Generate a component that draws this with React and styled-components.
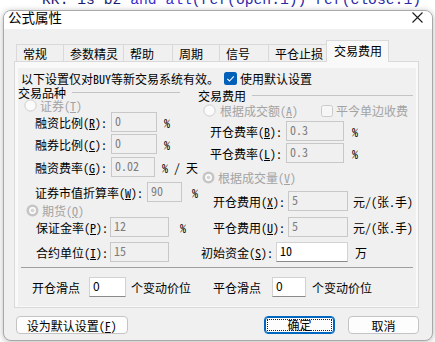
import React from 'react'
import styled, { createGlobalStyle } from 'styled-components'

const UI_FONT = `"Noto Sans Mono CJK SC", "Noto Sans CJK SC", sans-serif`
const YAHEI = `"Noto Sans CJK SC", sans-serif`

const GlobalStyle = createGlobalStyle`
  html, body {
    margin: 0;
    padding: 0;
    background: #fff;
  }
  body {
    font-family: ${UI_FONT};
    font-size: 12px;
    line-height: 13px;
    color: #000;
  }
`

const Page = styled.div`
  width: 435px;
  height: 342px;
  overflow: hidden;
  background: #fff;
`

const CodeLine = styled.div`
  height: 10px;
  overflow: hidden;
  padding-left: 42px;
  font-family: "Liberation Mono", monospace;
  font-size: 14.7px;
  line-height: 15px;
  white-space: pre;

  & > div {
    margin-top: -7px;
  }
`

const Token = styled.span`
  color: ${(p) => p.$color};
`

const Window = styled.div`
  margin-left: 3px;
  width: 430px;
  height: 331px;
  box-sizing: border-box;
  border: 1px solid #a9a9a9;
  border-radius: 8px;
  overflow: hidden;
  background: #f0f0f0;
  box-shadow: 0 1px 6px rgba(0, 0, 0, 0.28);
  display: flex;
  flex-direction: column;
`

const TitleBar = styled.div`
  background: #fff;
  display: flex;
  align-items: center;
  justify-content: space-between;
  padding: 0 9px 5px 4px;
  height: 13px;
`

const Title = styled.span`
  font-family: ${YAHEI};
  font-size: 13.5px;
  line-height: 13px;
`

const Body = styled.div`
  padding: 11px 13px 0 10px;
`

const TabStrip = styled.div`
  display: flex;
  align-items: flex-end;
  height: 22px;
  margin-left: 2px;
  margin-bottom: -1px;
  position: relative;
  z-index: 1;
`

const Tab = styled.div`
  box-sizing: border-box;
  width: ${(p) => p.$w}px;
  height: ${(p) => (p.$active ? 22 : 18)}px;
  margin-right: -1px;
  padding: ${(p) => (p.$active ? '0 0 2px 7px' : '0 0 0 6px')};
  border: 1px solid #d9d9d9;
  border-bottom: ${(p) => (p.$active ? 'none' : '1px solid #d9d9d9')};
  background: ${(p) => (p.$active ? '#f9f9f9' : '#f0f0f0')};
  font-family: ${YAHEI};
  font-size: 12px;
  display: flex;
  align-items: center;
  white-space: nowrap;
`

const Panel = styled.div`
  box-sizing: border-box;
  width: 405px;
  height: 247px;
  border: 1px solid #d9d9d9;
  background: #f9f9f9;
  padding: 6px 2px 1px 3px;
`

const Sheet = styled.div`
  height: 100%;
  background: #f0f0f0;
  display: flex;
  flex-direction: column;
`

const IntroRow = styled.div`
  display: flex;
  align-items: center;
  height: 16px;
  margin-top: 2px;
  padding-left: 3px;
  white-space: nowrap;
`

const Columns = styled.div`
  display: flex;
`

const Column = styled.div`
  width: ${(p) => p.$w}px;
  padding-top: ${(p) => p.$top}px;
  display: flex;
  flex-direction: column;
`

const GroupHeader = styled.div`
  display: flex;
  align-items: center;
  height: ${(p) => p.$h}px;
  margin-right: ${(p) => p.$right}px;
  white-space: nowrap;

  &::after {
    content: '';
    flex: 1;
    height: 1px;
    margin-left: 6px;
    background: #c4c4c4;
  }
`

const OptionRow = styled.div`
  display: flex;
  align-items: center;
  height: ${(p) => p.$h}px;
  margin-top: ${(p) => p.$top || 0}px;
  padding-left: ${(p) => p.$indent}px;
  padding-right: ${(p) => p.$right || 0}px;
  white-space: nowrap;
`

const Muted = styled.span`
  color: #a3a3a3;
  margin-left: ${(p) => p.$gap}px;
`

const CheckLabel = styled.span`
  margin-left: 3px;
`

const Spacer = styled.div`
  flex: 1;
`

const FieldRow = styled.div`
  display: flex;
  align-items: center;
  height: 20px;
  margin-top: ${(p) => p.$top || 0}px;
  padding-left: ${(p) => p.$indent}px;
  white-space: nowrap;
`

const TextBox = styled.div`
  box-sizing: border-box;
  width: ${(p) => p.$w}px;
  height: 20px;
  margin-left: ${(p) => p.$gap}px;
  border: 1px solid ${(p) => (p.$enabled ? '#d2d2d2' : '#c8c8c8')};
  border-bottom-color: ${(p) => (p.$enabled ? '#8a8a8a' : '#c8c8c8')};
  background: ${(p) => (p.$enabled ? '#fff' : '#f0f0f0')};
  color: ${(p) => (p.$enabled ? '#000' : '#7d7d7d')};
  padding: 0 3px;
  line-height: 16px;
`

const Unit = styled.span`
  margin-left: ${(p) => p.$gap}px;
`

const Separator = styled.div`
  height: 1px;
  margin: 5px 3px 0 3px;
  background: #a0a0a0;
`

const SlipRow = styled.div`
  display: flex;
  align-items: center;
  height: 20px;
  margin-top: 9px;
  padding-left: 14px;
  font-family: ${YAHEI};
  white-space: nowrap;
`

const SlipText = styled.span`
  margin-left: ${(p) => p.$gap || 0}px;
`

const Footer = styled.div`
  display: flex;
  align-items: center;
  margin-top: 8px;
  padding-left: 2px;
`

const Button = styled.div`
  box-sizing: border-box;
  width: ${(p) => p.$w}px;
  height: 18px;
  margin-left: ${(p) => p.$gap || 0}px;
  border: 1px solid ${(p) => (p.$primary ? '#0067c0' : '#c4c4c4')};
  box-shadow: ${(p) => (p.$primary ? 'inset 0 0 0 1px #0067c0' : 'none')};
  border-radius: 4px;
  background: #fdfdfd;
  display: flex;
  align-items: center;
  justify-content: center;
  padding: 2px;
`

const FocusRing = styled.div`
  flex: 1;
  align-self: stretch;
  border: 1px dotted #222;
  display: flex;
  align-items: center;
  justify-content: center;
  line-height: 10px;
`

const tabs = [
  { label: '常规', w: 48 },
  { label: '参数精灵', w: 61 },
  { label: '帮助', w: 50 },
  { label: '周期', w: 48 },
  { label: '信号', w: 50 },
  { label: '平仓止损', w: 59 },
  { label: '交易费用', w: 63, active: true },
]

const Key = ({ k }) => (
  <>
    (<u>{k}</u>)
  </>
)

const CloseIcon = () => (
  <svg width="11" height="11" viewBox="0 0 11 11">
    <path d="M0.5 0.5 L10.5 10.5 M10.5 0.5 L0.5 10.5" stroke="#1a1a1a" strokeWidth="1.1" />
  </svg>
)

const Radio = ({ checked }) =>
  checked ? (
    <svg width="13" height="13" viewBox="0 0 13 13">
      <circle cx="6.5" cy="6.5" r="6" fill="#c5c5c5" />
      <circle cx="6.5" cy="6.5" r="3.4" fill="#fff" />
      <circle cx="6.5" cy="6.5" r="2" fill="#d6d6d6" />
    </svg>
  ) : (
    <svg width="13" height="13" viewBox="0 0 13 13">
      <circle cx="6.5" cy="6.5" r="5.6" fill="#fbfbfb" stroke="#cdcdcd" strokeWidth="1" />
    </svg>
  )

const CheckBox = ({ checked }) =>
  checked ? (
    <svg width="13" height="13" viewBox="0 0 13 13">
      <rect x="0" y="0" width="13" height="13" rx="2.5" fill="#005fb8" />
      <path d="M3.3 6.8 L5.5 9 L9.8 4.3" fill="none" stroke="#fff" strokeWidth="1.1" />
    </svg>
  ) : (
    <svg width="12" height="12" viewBox="0 0 12 12">
      <rect x="0.5" y="0.5" width="11" height="11" rx="2" fill="#f6f6f6" stroke="#cbcbcb" />
    </svg>
  )

const Field = ({ label, value, indent, gap, w, unit, unitGap, top, enabled }) => (
  <FieldRow $indent={indent} $top={top}>
    <span>{label}</span>
    <TextBox $w={w} $gap={gap} $enabled={enabled}>
      {value}
    </TextBox>
    {unit && <Unit $gap={unitGap}>{unit}</Unit>}
  </FieldRow>
)

export default function App() {
  return (
    <Page>
      <GlobalStyle />
      <CodeLine>
        <div>
          <Token $color="#1b1b6e">RR: is bz </Token>
          <Token $color="#3a2fd0">and all</Token>
          <Token $color="#2a2aa8">(ref(open.1)) ref(close.1)</Token>
        </div>
      </CodeLine>
      <Window>
        <TitleBar>
          <Title>公式属性</Title>
          <CloseIcon />
        </TitleBar>
        <Body>
          <TabStrip>
            {tabs.map((t) => (
              <Tab key={t.label} $w={t.w} $active={t.active}>
                {t.label}
              </Tab>
            ))}
          </TabStrip>
          <Panel>
            <Sheet>
              <IntroRow>
                <span>以下设置仅对BUY等新交易系统有效。</span>
                <span style={{ width: 5 }} />
                <CheckBox checked />
                <CheckLabel>使用默认设置</CheckLabel>
              </IntroRow>
              <Columns>
                <Column $w={180} $top={0}>
                  <GroupHeader $h={13} $right={18}>
                    交易品种
                  </GroupHeader>
                  <OptionRow $h={13} $indent={6}>
                    <Radio />
                    <Muted $gap={3}>
                      证券<Key k="T" />
                    </Muted>
                  </OptionRow>
                  <Field label={<>融资比例<Key k="R" />:</>} value="0" indent={17} gap={4} w={46} unit="%" unitGap={7} />
                  <Field label={<>融券比例<Key k="C" />:</>} value="0" indent={17} gap={4} w={46} unit="%" unitGap={7} top={2} />
                  <Field label={<>融资费率<Key k="G" />:</>} value="0.02" indent={17} gap={4} w={46} unit="% / 天" unitGap={7} top={3} />
                  <Field label={<>证券市值折算率<Key k="W" />:</>} value="90" indent={17} gap={4} w={37} unit="%" unitGap={10} top={5} />
                  <OptionRow $h={14} $indent={8} $top={1}>
                    <Radio checked />
                    <Muted $gap={3}>
                      期货<Key k="Q" />
                    </Muted>
                  </OptionRow>
                  <Field label={<>保证金率<Key k="P" />:</>} value="12" indent={18} gap={2} w={59} unit="%" unitGap={11} />
                  <Field label={<>合约单位<Key k="I" />:</>} value="15" indent={18} gap={2} w={59} top={5} />
                </Column>
                <Column $w={218} $top={2}>
                  <GroupHeader $h={14} $right={3}>
                    交易费用
                  </GroupHeader>
                  <OptionRow $h={17} $indent={5} $right={8}>
                    <Radio />
                    <Muted $gap={4}>
                      根据成交额<Key k="A" />
                    </Muted>
                    <Spacer />
                    <CheckBox />
                    <Muted $gap={3}>平今单边收费</Muted>
                  </OptionRow>
                  <Field label={<>开仓费率<Key k="B" />:</>} value="0.3" indent={12} gap={4} w={58} unit="%" unitGap={8} top={2} />
                  <Field label={<>平仓费率<Key k="L" />:</>} value="0.3" indent={12} gap={4} w={58} unit="%" unitGap={8} top={2} />
                  <OptionRow $h={14} $indent={4} $top={7}>
                    <Radio checked />
                    <Muted $gap={3}>
                      根据成交量<Key k="V" />
                    </Muted>
                  </OptionRow>
                  <Field label={<>开仓费用<Key k="X" />:</>} value="5" indent={15} gap={3} w={60} unit="元/(张.手)" unitGap={5} top={7} />
                  <Field label={<>平仓费用<Key k="U" />:</>} value="5" indent={15} gap={3} w={60} unit="元/(张.手)" unitGap={5} top={6} />
                  <Field label={<>初始资金<Key k="S" />:</>} value="10" indent={3} gap={3} w={72} unit="万" unitGap={7} top={5} enabled />
                </Column>
              </Columns>
              <Separator />
              <SlipRow>
                <SlipText>开仓滑点</SlipText>
                <TextBox $w={37} $gap={9} $enabled>
                  0
                </TextBox>
                <SlipText $gap={5}>个变动价位</SlipText>
                <SlipText $gap={22}>平仓滑点</SlipText>
                <TextBox $w={34} $gap={11} $enabled>
                  0
                </TextBox>
                <SlipText $gap={6}>个变动价位</SlipText>
              </SlipRow>
            </Sheet>
          </Panel>
          <Footer>
            <Button $w={112}>
              设为默认设置<Key k="F" />
            </Button>
            <Button $w={72} $gap={136} $primary>
              <FocusRing>确定</FocusRing>
            </Button>
            <Button $w={71} $gap={13}>
              取消
            </Button>
          </Footer>
        </Body>
      </Window>
    </Page>
  )
}
